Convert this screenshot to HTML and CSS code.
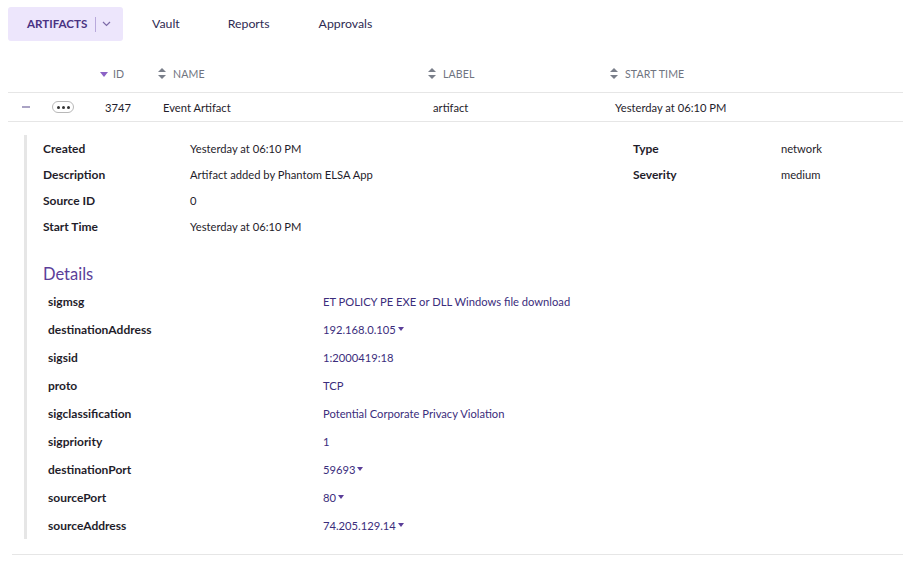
FILE: index.html
```html
<!DOCTYPE html>
<html>
<head>
<meta charset="utf-8">
<link rel="stylesheet" href="styles.css">
</head>
<body>
<nav class="tabs">
  <div class="tab tab-active">
    <span class="tab-label">ARTIFACTS</span>
    <span class="tab-sep"></span>
    <svg class="tab-chev" width="9" height="6" viewBox="0 0 9 6"><path d="M1 1l3.5 3.5L8 1" fill="none" stroke="#7d6aa8" stroke-width="1.2"/></svg>
  </div>
  <div class="tab tab-vault">Vault</div>
  <div class="tab tab-reports">Reports</div>
  <div class="tab tab-approvals">Approvals</div>
</nav>

<div class="table">
  <div class="thead">
    <div class="th"></div>
    <div class="th"></div>
    <div class="th"><span class="sort-down"></span>ID</div>
    <div class="th"><span class="sort-both"></span>NAME</div>
    <div class="th"><span class="sort-both"></span>LABEL</div>
    <div class="th"><span class="sort-both"></span>START TIME</div>
  </div>
  <div class="trow">
    <div class="td td-toggle"><span class="minus"></span></div>
    <div class="td td-more"><span class="more"><i></i><i></i><i></i></span></div>
    <div class="td">3747</div>
    <div class="td">Event Artifact</div>
    <div class="td">artifact</div>
    <div class="td">Yesterday at 06:10 PM</div>
  </div>
</div>

<section class="panel">
  <div class="overview">
    <div class="ov-label">Created</div><div class="ov-value">Yesterday at 06:10 PM</div>
    <div class="ov-label">Type</div><div class="ov-value">network</div>
    <div class="ov-label">Description</div><div class="ov-value">Artifact added by Phantom ELSA App</div>
    <div class="ov-label">Severity</div><div class="ov-value">medium</div>
    <div class="ov-label">Source ID</div><div class="ov-value">0</div>
    <div></div><div></div>
    <div class="ov-label">Start Time</div><div class="ov-value">Yesterday at 06:10 PM</div>
    <div></div><div></div>
  </div>
  <h2 class="details-title">Details</h2>
  <div class="details">
    <div class="d-label">sigmsg</div><div class="d-value">ET POLICY PE EXE or DLL Windows file download</div>
    <div class="d-label">destinationAddress</div><div class="d-value">192.168.0.105<span class="caret"></span></div>
    <div class="d-label">sigsid</div><div class="d-value">1:2000419:18</div>
    <div class="d-label">proto</div><div class="d-value">TCP</div>
    <div class="d-label">sigclassification</div><div class="d-value">Potential Corporate Privacy Violation</div>
    <div class="d-label">sigpriority</div><div class="d-value">1</div>
    <div class="d-label">destinationPort</div><div class="d-value">59693<span class="caret"></span></div>
    <div class="d-label">sourcePort</div><div class="d-value">80<span class="caret"></span></div>
    <div class="d-label">sourceAddress</div><div class="d-value">74.205.129.14<span class="caret"></span></div>
  </div>
</section>
<div class="bottom-rule"></div>
</body>
</html>
```

FILE: styles.css
```css
* { box-sizing: border-box; }
body {
  margin: 0;
  font-family: "Lato", "Open Sans", sans-serif;
  font-size: 11.2px;
  color: #1f1d2b;
  background: #fff;
}

/* Tabs */
.tabs {
  display: flex;
  align-items: center;
  padding: 7px 8px 0 8px;
  height: 41px;
}
.tab {
  font-size: 12.3px;
  color: #2e2a52;
  margin-top: -2px;
}
.tab-active {
  display: flex;
  align-items: center;
  height: 34px;
  width: 115px;
  padding-left: 19px;
  margin-top: 0;
  background: #ede6fc;
  border-radius: 3px;
}
.tab-label {
  font-weight: 700;
  color: #4a3383;
  font-size: 11.6px;
  margin-top: -1px;
}
.tab-sep {
  width: 1px;
  height: 15px;
  background: #b9a9dc;
  margin: 0 6px 0 8px;
}
.tab-chev { display: block; }
.tab-vault { margin-left: 29px; }
.tab-reports { margin-left: 48px; }
.tab-approvals { margin-left: 49px; }

/* Table */
.table { margin-left: 8px; }
.thead, .trow {
  display: grid;
  grid-template-columns: 38px 50px 58px 270px 182px 1fr;
  align-items: center;
}
.thead {
  height: 52px;
  padding-top: 14px;
  border-bottom: 1px solid #e6e6e6;
}
.th {
  display: flex;
  align-items: center;
  padding-left: 4px;
  font-size: 10.6px;
  color: #6f7480;
  letter-spacing: 0.1px;
}
.sort-down {
  width: 0; height: 0;
  border-left: 4px solid transparent;
  border-right: 4px solid transparent;
  border-top: 5px solid #8b62c6;
  margin-right: 5px;
  margin-top: 1px;
}
.sort-both {
  position: relative;
  width: 8px; height: 11px;
  margin-right: 7px;
}
.sort-both::before, .sort-both::after {
  content: "";
  position: absolute;
  left: 0;
  border-left: 4px solid transparent;
  border-right: 4px solid transparent;
}
.sort-both::before { top: 0; border-bottom: 4px solid #7a7f8a; }
.sort-both::after { bottom: 0; border-top: 4px solid #7a7f8a; }

.trow {
  height: 29px;
  border-bottom: 1px solid #e6e6e6;
}
.td {
  padding-left: 9px;
  color: #1f1d2b;
}
.td-toggle { padding-left: 14px; }
.minus {
  display: block;
  width: 8px;
  height: 2px;
  background: #aaa3c4;
}
.td-more { padding-left: 6px; }
.more {
  display: flex;
  gap: 2px;
  justify-content: center;
  align-items: center;
  width: 22px;
  height: 12px;
  border: 1px solid #b8b8b8;
  border-radius: 6px;
}
.more i {
  display: block;
  width: 3px; height: 3px;
  border-radius: 50%;
  background: #333;
}

/* Panel */
.panel {
  margin: 13px 0 0 24px;
  border-left: 3px solid #e6e6e6;
  padding-left: 16px;
}
.overview {
  display: grid;
  grid-template-columns: 147px 443px 148px 1fr;
  grid-auto-rows: 26px;
  align-items: center;
}
.ov-label { font-weight: 700; font-size: 12px; color: #1f1d2b; }
.ov-value { color: #1f1d2b; }

.details-title {
  margin: 23px 0 0 0;
  height: 24px;
  line-height: 24px;
  font-size: 16.5px;
  font-weight: 400;
  color: #5b3e99;
}
.details {
  display: grid;
  grid-template-columns: 275px 1fr;
  grid-auto-rows: 28px;
  align-items: center;
  padding-left: 5px;
  margin-top: 1px;
}
.d-label { font-weight: 700; font-size: 12px; color: #1f1d2b; }
.d-value { color: #3b2d7c; display: flex; align-items: center; }
.caret {
  width: 0; height: 0;
  border-left: 3.5px solid transparent;
  border-right: 3.5px solid transparent;
  border-top: 4px solid #5a3e99;
  margin-left: 2px;
}
.bottom-rule {
  margin: 15px 0 0 12px;
  border-top: 1px solid #e6e6e6;
}
```
